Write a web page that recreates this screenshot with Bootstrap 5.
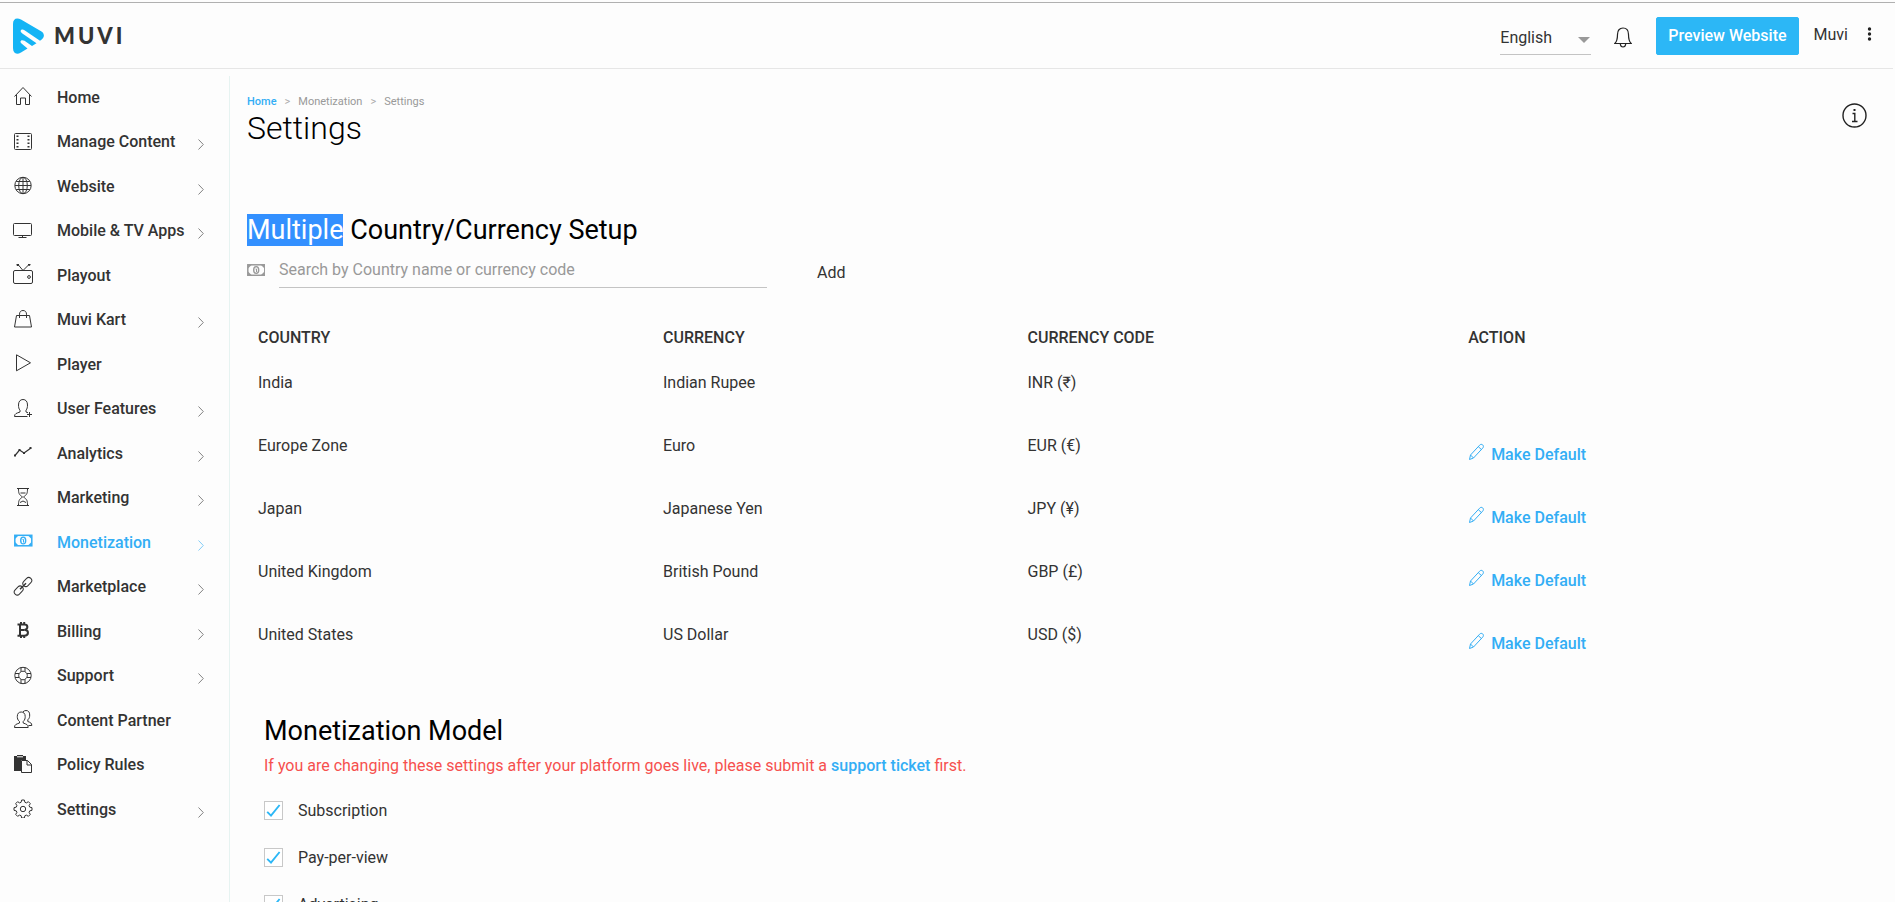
<!DOCTYPE html>
<html lang="en">
<head>
<meta charset="utf-8">
<meta name="viewport" content="width=device-width, initial-scale=1">
<title>Muvi - Settings</title>
<link rel="stylesheet" href="https://cdn.jsdelivr.net/npm/bootstrap@5.3.0/dist/css/bootstrap.min.css">
<style>
  :root { --brand: #2cb7f6; --ink: #333; --link: #33aef5; }
  body { font-family: Roboto, "Noto Sans", sans-serif; font-size: 16px; line-height: 23px; color: var(--ink); background: #fdfdfd; }
  a { text-decoration: none; }
  svg { display: block; flex: none; }
  .ico { width: 18px; height: 18px; fill: none; stroke: currentColor; stroke-width: 1; }

  /* Top bar */
  .top-line { height: 3px; border-bottom: 1px solid #b0b0b0; }
  .top-bar { height: 66px; border-bottom: 1px solid #e6e6e6; padding: 0 21px 0 13px; margin-right: 2px; }
  .wordmark { font-family: Lato, sans-serif; font-weight: 900; font-size: 22px; line-height: 24px; letter-spacing: 3px; color: #333; margin-left: 10px; }
  .lang { width: 91px; height: 36px; border: 0; border-bottom: 1px solid #c4c4c4; border-radius: 0; background: transparent; appearance: none; color: var(--ink); padding: 2px 0 0; }
  .lang-wrap { position: relative; margin-right: 23px; padding-top: 2px; }
  .lang-wrap svg { position: absolute; right: 1px; top: 20px; pointer-events: none; }
  .btn-preview { --bs-btn-bg: var(--brand); --bs-btn-color: #fff; --bs-btn-border-color: var(--brand); --bs-btn-hover-bg: #16a9ec; --bs-btn-hover-color: #fff; --bs-btn-border-radius: 2px; --bs-btn-font-weight: 500; --bs-btn-padding-x: 11px; --bs-btn-padding-y: 6px; height: 38px; line-height: 22px; }
  .plain-btn { border: 0; background: none; padding: 0; color: var(--ink); }
  .user-link { margin: 0 19px 3px 15px; color: var(--ink); }

  /* Side menu */
  .side { width: 230px; flex: none; margin-top: 7px; border-right: 1px solid #e6f3f1; padding-bottom: 70px; }
  .side-link { display: flex; align-items: center; height: 44px; padding: 0 25px 3px 11px; color: var(--ink); font-weight: 500; }
  .side li:nth-child(odd) .side-link { height: 45px; }
  .side-link .ico { width: 24px; height: 20px; margin-right: 22px; margin-bottom: 2px; }
  .side-link .chev { width: 6px; height: 11px; margin-left: auto; margin-top: 6px; fill: none; stroke: currentColor; stroke-width: 1; opacity: .6; }
  .side-link.active { color: var(--link); }

  /* Content */
  .content { padding: 0 28px 0 17px; }
  .crumbs { font-size: 11px; line-height: 16px; padding-top: 25px; --bs-breadcrumb-divider: '>'; --bs-breadcrumb-item-padding-x: 8px; --bs-breadcrumb-divider-color: #aaa; color: #999; margin: 0; }
  .crumbs a { color: var(--link); font-weight: 500; }
  .page-title { font-size: 32px; line-height: 36px; font-weight: 300; color: #000; margin: 0; }
  .info-btn { margin: 34px 0 0; color: #222; }
  .section-title { font-size: 27px; line-height: 33px; font-weight: 400; color: #000; margin: 0; }
  .picked { background: #3390ff; color: #fff; }
  .money-grey { color: #999; margin-top: 17px; margin-right: 14px; }
  .currency-setup { margin-top: 68px; }
  .wide-gutters { --bs-gutter-x: 30px; }
  .search-box { border: 0; border-bottom: 1px solid #c4c4c4; border-radius: 0; background: transparent; padding: 11px 0 7px; height: 41px; line-height: 22px; color: var(--ink); min-width: 0; flex: 1; outline: 0; }
  .search-box::placeholder { color: #999; opacity: 1; }
  .add-btn { padding: 14px 20px 4px; }
  .rates { table-layout: fixed; margin: 27px 0 0; width: 100%; }
  .rates th { font-weight: 500; padding: 11px; text-transform: uppercase; height: 45px; }
  .rates td { padding: 11px; height: 63px; vertical-align: top; }
  .rates td:last-child { vertical-align: middle; }
  .rates a { color: var(--link); font-weight: 500; display: inline-flex; gap: 6px; }
  .rates a svg { width: 17px; height: 18px; }
  .model { padding: 40px 0 0 17px; }
  .warn { color: #f6504e; margin: 6px 0 0; }
  .warn a { color: var(--link); font-weight: 500; }
  .pick { display: flex; align-items: center; height: 47px; }
  .pick input { appearance: none; width: 19px; height: 19px; margin: 0 15px 0 0; border: 1px solid #c8c8c8; background: #fff; }
  .pick input:checked { background: #fff url("data:image/svg+xml,%3Csvg xmlns='http://www.w3.org/2000/svg' viewBox='0 0 17 17'%3E%3Cpath d='M2.2 9.8 6 13.6 14.6 3' fill='none' stroke='%232cb7f6' stroke-width='1.9'/%3E%3C/svg%3E") center / 17px no-repeat; }
  .model-list { margin-top: 10px; }
</style>
</head>
<body>
<svg width="0" height="0" class="position-absolute" aria-hidden="true">
  <symbol id="chev" viewBox="0 0 6 11"><path d="M.5.5 5.3 5.5.5 10.5"/></symbol>
  <symbol id="home" viewBox="0 0 24 20"><path d="M3.500 10.500 12 1.500l8.500 9M5.500 8.800v9.700h4v-6.500h5v6.500h4V8.800"/></symbol>
  <symbol id="film" viewBox="0 0 24 20"><rect x="3.500" y="2.500" width="17" height="16" rx="1"/><path d="M6.500 4.500v12M17.500 4.500v12" stroke-width="2" stroke-dasharray="1.500 2"/></symbol>
  <symbol id="globe" viewBox="0 0 24 20"><circle cx="12" cy="10.500" r="8.200"/><ellipse cx="12" cy="10.500" rx="4.300" ry="8.200"/><path d="M12 2.300v16.400M4 10.500h16M5.200 6.500h13.600M5.200 14.500h13.600"/></symbol>
  <symbol id="screen" viewBox="0 0 24 20"><rect x="2.500" y="3.500" width="18" height="12" rx="1"/><path d="M11.500 15.500v2M7.500 17.500h8"/></symbol>
  <symbol id="tv" viewBox="0 0 24 20"><rect x="2.500" y="6.500" width="19" height="13" rx="1.500"/><circle cx="18" cy="13" r="1.400"/><path d="M7 .5 12 6.500 18 .5"/><path d="M6 0h1.500v1.500H6zM17.500-.3H19v1.500h-1.500z" fill="currentColor"/></symbol>
  <symbol id="bag" viewBox="0 0 24 20"><path d="M5.500 6.500h13l2 11.500h-17zM8.500 9V5.200C8.500 2.800 10 1.500 12 1.500s3.500 1.300 3.500 3.700V9"/></symbol>
  <symbol id="play" viewBox="0 0 24 20"><path d="M5.500 1.800v16L19.500 9.800z"/></symbol>
  <symbol id="user" viewBox="0 0 24 20"><path d="M16.500 18.500h-13c0-3 2-3.200 5.500-4.500v-1.800C7.800 11 7.500 9 7.500 7c0-3.500 1.700-5.500 4.500-5.500s4.500 2 4.500 5.500c0 2-.3 4-1.500 5.200V14l2 .8M18.500 14v5M16 16.500h5"/></symbol>
  <symbol id="chart" viewBox="0 0 24 20"><path d="M4 13.500 8.500 8l4.500 3 7-5" stroke-width="1.200"/><path d="M3 12.500h2v2H3zM7.500 7h2v2h-2zM12 10h2v2h-2zM18.500 5h2v2h-2z" fill="currentColor" stroke="none"/></symbol>
  <symbol id="glass" viewBox="0 0 24 20"><path d="M6 1.500h12M6 18.500h12M7.500 1.500c0 5 .5 6 4 8.500-3.500 2.500-4 3.500-4 8.500M16.500 1.500c0 5-.5 6-4 8.500 3.500 2.500 4 3.500 4 8.500M9.500 6h5M9 15.500l3-1.500 3 1.500"/></symbol>
  <symbol id="money" viewBox="0 0 24 20"><rect x="3.800" y="4.300" width="17" height="10.500" stroke-width="1.500"/><path d="M4 4h4L4 8zM20.500 4h-4l4 4zM4 15v-4l4 4zM20.500 15v-4l-4 4z" fill="currentColor" stroke="none"/><ellipse cx="12.200" cy="9.500" rx="2.500" ry="3.400" stroke-width="1.400"/><path d="M11.500 8.500h1V11.500"/></symbol>
  <symbol id="chain" viewBox="0 0 24 20"><rect x="-5" y="-3" width="10" height="6" rx="3" transform="translate(16.300 6) rotate(-45)"/><rect x="-5" y="-3" width="10" height="6" rx="3" transform="translate(7.700 14.500) rotate(-45)"/><path d="M9 13.300 15 7.300" stroke-width="1.500"/></symbol>
  <symbol id="bitcoin" viewBox="0 0 24 20"><path d="M6.500 4.500h6.800c4 0 4 4.500.5 5.200 4.300.5 4.300 6-.6 6H6.500M9 4.500v11.200M9.500 9.900h4M10 2v2.500M13.200 2v2.500M10 15.700V18M13.200 15.700V18" stroke-width="2"/></symbol>
  <symbol id="buoy" viewBox="0 0 24 20"><circle cx="12" cy="10.500" r="8.200"/><circle cx="12" cy="10.500" r="4.300"/><path d="M10 2.500v4M14 2.500v4M10 14.500v4M14 14.500v4M4 8.500h4M4 12.500h4M16 8.500h4M16 12.500h4"/></symbol>
  <symbol id="users" viewBox="0 0 24 20"><path d="M3.500 18.500c0-3 1.500-3.200 5-4.500v-1.500C6.500 11 6.300 9 6.300 7.500 6.300 4.500 7.800 3 10.200 3s4 1.500 4 4.500c0 1.500-.2 3.500-2 5V14c3.300 1.300 5 1.500 5 4.500zM12 2.800c.8-.8 1.800-1.300 3-1.300 2.500 0 3.700 1.800 3.700 4.500 0 2-.4 3.500-1.900 4.800V12.500c2.700 1 4 1.500 4 4H17.500"/></symbol>
  <symbol id="paste" viewBox="0 0 24 20"><path d="M3 2h3V1h6v1h3v4h-5v11H3z" fill="currentColor" stroke="none"/><path d="M6 2.800h6" stroke="#fff"/><path d="M10.500 6.500h6l4 4v8h-10zM16 6.500v4.500h4.500"/></symbol>
  <symbol id="gear" viewBox="0 0 24 20"><path d="M10.700 2h2.600l.6 2.300 1.500.6 2-1.200 1.900 1.900-1.200 2 .6 1.500 2.300.6v2.600l-2.300.6-.6 1.500 1.200 2-1.900 1.900-2-1.200-1.500.6-.6 2.300h-2.600l-.6-2.300-1.500-.6-2 1.200-1.900-1.900 1.200-2-.6-1.500L3 12.300V9.700l2.300-.6.6-1.500-1.200-2 1.900-1.900 2 1.200 1.500-.6z"/><circle cx="12" cy="11" r="2.700"/></symbol>
  <symbol id="pencil" viewBox="0 0 17 18"><path d="M1.500 16.500 2.500 12 11.500 2.300c1-1.200 2.300-1.200 3.200-.4s1 2.200 0 3.200L5.500 15zM2.500 12 5.500 15M10.300 3.700l3.200 2.900" fill="none" stroke="currentColor"/></symbol>
</svg>

<div class="top-line"></div>
<header class="top-bar d-flex align-items-center">
  <a href="#" class="d-flex align-items-center" aria-label="Muvi">
    <svg width="31" height="36" viewBox="0 0 31 36"><path d="M0 6C0 .8 3.500-.8 8 1.600L28.500 13.500c3 2 3.300 5.500.2 8L27 22.800 11.500 12.200C8.500 10.200 6 13 9 15.300L23.500 25.300 19 28 11.500 22.800C8 20.800 6 23.800 8.800 25.800L14.500 30.500 8 34.500C3.500 37 0 35.500 0 30 -.3 22-.3 14 0 6z" fill="#14b4f5"/></svg>
    <span class="wordmark">MUVI</span>
  </a>
  <div class="d-flex align-items-center ms-auto">
    <div class="lang-wrap">
      <select class="lang" aria-label="Language"><option>English</option></select>
      <svg width="12" height="6" viewBox="0 0 12 6"><path d="M0 0h12L6 6z" fill="#999"/></svg>
    </div>
    <button type="button" class="plain-btn me-4 pt-1" aria-label="Notifications">
      <svg width="18" height="21" viewBox="0 0 18 21" fill="none" stroke="#222" stroke-width="1.200"><path d="M.8 16.500C3 14.500 3.500 13 3.500 7.500 3.500 3.500 5.500 1 9 1s5.500 2.500 5.500 6.500c0 5.500.5 7 2.700 9zM6.300 17c.2 2 1.200 3 2.700 3s2.500-1 2.700-3"/></svg>
    </button>
    <button type="button" class="btn btn-preview">Preview Website</button>
    <a href="#" class="user-link">Muvi</a>
    <button type="button" class="plain-btn mb-1" aria-label="More options">
      <svg width="5" height="14" viewBox="0 0 5 14" fill="#222"><circle cx="2.500" cy="2" r="1.700"/><circle cx="2.500" cy="7" r="1.700"/><circle cx="2.500" cy="12" r="1.700"/></svg>
    </button>
  </div>
</header>

<div class="d-flex">
  <nav class="side" aria-label="Main menu">
    <ul class="list-unstyled m-0">
      <li><a href="#" class="side-link"><svg class="ico"><use href="#home"/></svg>Home</a></li>
      <li><a href="#" class="side-link"><svg class="ico"><use href="#film"/></svg>Manage Content<svg class="chev"><use href="#chev"/></svg></a></li>
      <li><a href="#" class="side-link"><svg class="ico"><use href="#globe"/></svg>Website<svg class="chev"><use href="#chev"/></svg></a></li>
      <li><a href="#" class="side-link"><svg class="ico"><use href="#screen"/></svg>Mobile &amp; TV Apps<svg class="chev"><use href="#chev"/></svg></a></li>
      <li><a href="#" class="side-link"><svg class="ico"><use href="#tv"/></svg>Playout</a></li>
      <li><a href="#" class="side-link"><svg class="ico"><use href="#bag"/></svg>Muvi Kart<svg class="chev"><use href="#chev"/></svg></a></li>
      <li><a href="#" class="side-link"><svg class="ico"><use href="#play"/></svg>Player</a></li>
      <li><a href="#" class="side-link"><svg class="ico"><use href="#user"/></svg>User Features<svg class="chev"><use href="#chev"/></svg></a></li>
      <li><a href="#" class="side-link"><svg class="ico"><use href="#chart"/></svg>Analytics<svg class="chev"><use href="#chev"/></svg></a></li>
      <li><a href="#" class="side-link"><svg class="ico"><use href="#glass"/></svg>Marketing<svg class="chev"><use href="#chev"/></svg></a></li>
      <li><a href="#" class="side-link active" aria-current="page"><svg class="ico"><use href="#money"/></svg>Monetization<svg class="chev"><use href="#chev"/></svg></a></li>
      <li><a href="#" class="side-link"><svg class="ico"><use href="#chain"/></svg>Marketplace<svg class="chev"><use href="#chev"/></svg></a></li>
      <li><a href="#" class="side-link"><svg class="ico"><use href="#bitcoin"/></svg>Billing<svg class="chev"><use href="#chev"/></svg></a></li>
      <li><a href="#" class="side-link"><svg class="ico"><use href="#buoy"/></svg>Support<svg class="chev"><use href="#chev"/></svg></a></li>
      <li><a href="#" class="side-link"><svg class="ico"><use href="#users"/></svg>Content Partner</a></li>
      <li><a href="#" class="side-link"><svg class="ico"><use href="#paste"/></svg>Policy Rules</a></li>
      <li><a href="#" class="side-link"><svg class="ico"><use href="#gear"/></svg>Settings<svg class="chev"><use href="#chev"/></svg></a></li>
    </ul>
  </nav>

  <main class="content flex-grow-1">
    <div class="d-flex justify-content-between align-items-start">
      <div>
        <ol class="breadcrumb crumbs">
          <li class="breadcrumb-item"><a href="#">Home</a></li>
          <li class="breadcrumb-item">Monetization</li>
          <li class="breadcrumb-item">Settings</li>
        </ol>
        <h1 class="page-title">Settings</h1>
      </div>
      <button type="button" class="plain-btn info-btn" aria-label="Information">
        <svg width="25" height="25" viewBox="0 0 25 25" fill="none" stroke="currentColor" stroke-width="1.400"><circle cx="12.500" cy="12.500" r="11.500"/><path d="M10.500 10.500h2.300v8M10 18.500h5.500"/><path d="M11.500 6h2v2h-2z" fill="currentColor" stroke="none"/></svg>
      </button>
    </div>

    <section class="currency-setup">
      <h2 class="section-title"><span class="picked">Multiple</span> Country/Currency Setup</h2>
      <form class="row wide-gutters">
        <div class="col-4 d-flex">
          <svg class="money-grey" width="18" height="12" viewBox="3 3.500 18 12" fill="none" stroke="currentColor"><use href="#money" width="24" height="20"/></svg>
          <input type="text" class="search-box" placeholder="Search by Country name or currency code" aria-label="Search by Country name or currency code">
        </div>
        <div class="col-auto"><button type="button" class="plain-btn add-btn">Add</button></div>
      </form>

      <table class="rates">
        <colgroup><col style="width:25%"><col style="width:22.5%"><col style="width:27.2%"><col></colgroup>
        <thead><tr><th scope="col">Country</th><th scope="col">Currency</th><th scope="col">Currency Code</th><th scope="col">Action</th></tr></thead>
        <tbody>
          <tr><td>India</td><td>Indian Rupee</td><td>INR (₹)</td><td></td></tr>
          <tr><td>Europe Zone</td><td>Euro</td><td>EUR (€)</td><td><a href="#"><svg><use href="#pencil"/></svg>Make Default</a></td></tr>
          <tr><td>Japan</td><td>Japanese Yen</td><td>JPY (¥)</td><td><a href="#"><svg><use href="#pencil"/></svg>Make Default</a></td></tr>
          <tr><td>United Kingdom</td><td>British Pound</td><td>GBP (£)</td><td><a href="#"><svg><use href="#pencil"/></svg>Make Default</a></td></tr>
          <tr><td>United States</td><td>US Dollar</td><td>USD ($)</td><td><a href="#"><svg><use href="#pencil"/></svg>Make Default</a></td></tr>
        </tbody>
      </table>
    </section>

    <section class="model">
      <h2 class="section-title">Monetization Model</h2>
      <p class="warn">If you are changing these settings after your platform goes live, please submit a <a href="#">support ticket</a> first.</p>
      <div class="model-list">
        <div class="pick"><input type="checkbox" id="m-sub" checked><label for="m-sub">Subscription</label></div>
        <div class="pick"><input type="checkbox" id="m-ppv" checked><label for="m-ppv">Pay-per-view</label></div>
        <div class="pick"><input type="checkbox" id="m-ads" checked><label for="m-ads">Advertising</label></div>
      </div>
    </section>
  </main>
</div>
<script src="https://cdn.jsdelivr.net/npm/bootstrap@5.3.0/dist/js/bootstrap.bundle.min.js"></script>
</body>
</html>
